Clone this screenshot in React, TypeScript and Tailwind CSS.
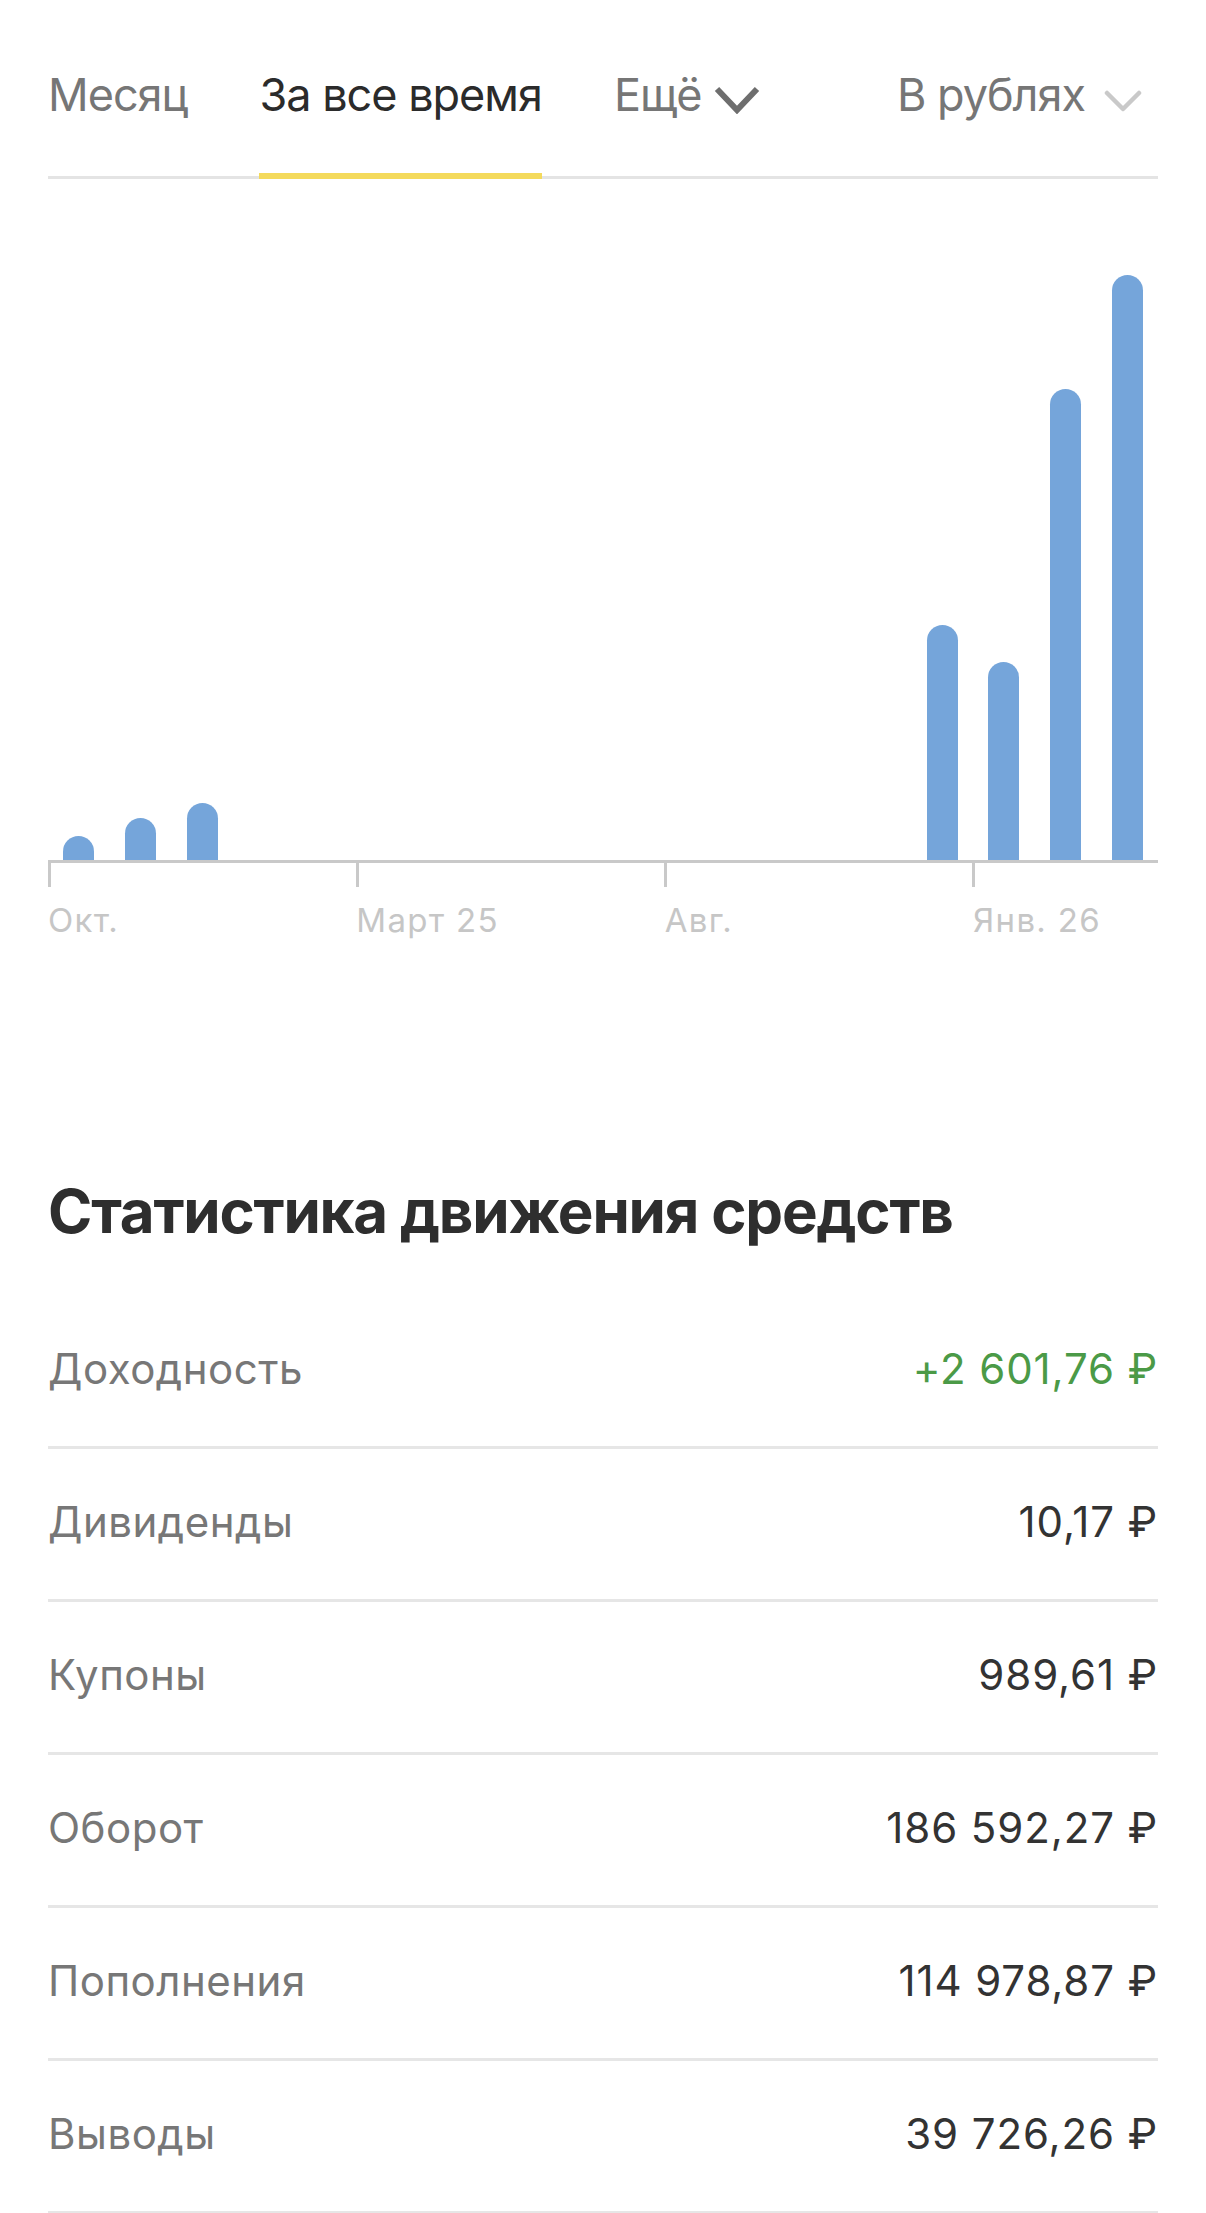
import React from "react";

const bars = [24, 42, 57, 0, 0, 0, 0, 0, 0, 0, 0, 0, 0, 0, 235, 198, 471, 585];
const labels: Record<number, string> = { 0: "Окт.", 5: "Март 25", 10: "Авг.", 15: "Янв. 26" };

const rows: { label: string; value: string; green?: boolean }[] = [
  { label: "Доходность", value: "+2 601,76 ₽", green: true },
  { label: "Дивиденды", value: "10,17 ₽" },
  { label: "Купоны", value: "989,61 ₽" },
  { label: "Оборот", value: "186 592,27 ₽" },
  { label: "Пополнения", value: "114 978,87 ₽" },
  { label: "Выводы", value: "39 726,26 ₽" },
];

export default function App() {
  return (
    <div className="w-[1206px] h-[2213px] overflow-hidden bg-white [font-family:Inter,'Noto_Sans',sans-serif]">
      <div className="px-[48px]">
        {/* Tabs */}
        <div className="flex items-stretch h-[179px] pt-[68px] border-b-[3px] border-[#e4e4e4] text-[45px] leading-[54px] tracking-[-1px]">
          <div className="text-[#767676]">Месяц</div>
          <div className="relative ml-[72px] text-[#2b2b2b]">
            За все время
            <div className="absolute left-0 right-0 bottom-[-3px] h-[6px] bg-[#f4da5c]" />
          </div>
          <div className="ml-[72px] flex items-start text-[#767676]">
            <span>Ещё</span>
            <svg className="ml-[13px] mt-[18px]" width="46" height="28" viewBox="0 0 46 28">
              <path d="M3 3 L23 24 L43 3" fill="none" stroke="#6e6e6e" strokeWidth="6" strokeLinejoin="miter" />
            </svg>
          </div>
          <div className="ml-auto pr-[16px] flex items-start text-[#767676]">
            <span>В рублях</span>
            <svg className="ml-[19px] mt-[22px]" width="38" height="22" viewBox="0 0 38 22">
              <path d="M3 3 L19 19 L35 3" fill="none" stroke="#c9c9c9" strokeWidth="4.5" strokeLinecap="round" strokeLinejoin="round" />
            </svg>
          </div>
        </div>

        {/* Chart */}
        <div className="mt-[81px] flex h-[600px] items-end">
          {bars.map((h, i) => (
            <div key={i} className="flex-1 h-full flex items-end justify-center">
              {h > 0 && <div className="w-[31px] rounded-t-full bg-[#75a5da]" style={{ height: h }} />}
            </div>
          ))}
        </div>
        <div className="h-[3px] bg-[#c9c9c9]" />
        <div className="flex h-[24px]">
          {bars.map((_, i) => (
            <div key={i} className={i % 5 === 0 ? "flex-1 border-l-[3px] border-[#c9c9c9]" : "flex-1"} />
          ))}
        </div>
        <div className="mt-[13px] flex h-[40px]">
          {bars.map((_, i) => (
            <div key={i} className="flex-1 min-w-0">
              {labels[i] && (
                <span className="whitespace-nowrap text-[33px] leading-[40px] tracking-[1.3px] text-[#c6c6c6]">{labels[i]}</span>
              )}
            </div>
          ))}
        </div>

        {/* Heading */}
        <h2 className="mt-[235px] text-[60px] leading-[72px] font-bold tracking-[-1.2px] text-[#2e2e2e]">
          Статистика движения средств
        </h2>

        {/* Rows */}
        <div className="mt-[49px]">
          {rows.map((r) => (
            <div
              key={r.label}
              className="h-[153px] pb-[5px] flex items-center justify-between border-b-[3px] border-[#e6e6e6] text-[42px] leading-[50px]"
            >
              <span className="tracking-[0.5px] text-[#777777]">{r.label}</span>
              <span className={r.green ? "tracking-[0.9px] text-[#4b9a47]" : "tracking-[0.9px] text-[#333333]"}>{r.value}</span>
            </div>
          ))}
        </div>
      </div>
    </div>
  );
}
